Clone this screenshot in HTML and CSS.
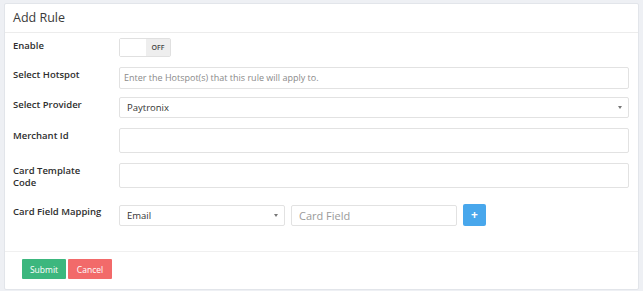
FILE: index.html
```html
<!DOCTYPE html>
<html lang="en">
<head>
    <meta charset="UTF-8">
    <meta name="viewport" content="width=device-width, initial-scale=1.0">
    <title>Add Rule</title>
    <link rel="stylesheet" href="styles.css">
</head>
<body>
<div class="card">
    <div class="card-header">Add Rule</div>

    <div class="card-body">
        <div class="form-row">
            <label>Enable</label>
            <div class="toggle">
                <span class="toggle-handle"></span>
                <span class="toggle-off">OFF</span>
            </div>
        </div>

        <div class="form-row hotspot">
            <label>Select Hotspot</label>
            <div class="input placeholder">Enter the Hotspot(s) that this rule will apply to.</div>
        </div>

        <div class="form-row">
            <label>Select Provider</label>
            <div class="input select">Paytronix<span class="caret"></span></div>
        </div>

        <div class="form-row tall">
            <label>Merchant Id</label>
            <div class="input"></div>
        </div>

        <div class="form-row tall last-tall">
            <label>Card Template Code</label>
            <div class="input"></div>
        </div>

        <div class="form-row">
            <label>Card Field Mapping</label>
            <div class="mapping">
                <div class="input select small">Email<span class="caret"></span></div>
                <div class="input small big-placeholder">Card Field</div>
                <button class="btn-add">+</button>
            </div>
        </div>
    </div>

    <div class="card-footer">
        <button class="btn btn-submit">Submit</button>
        <button class="btn btn-cancel">Cancel</button>
    </div>
</div>
</body>
</html>
```

FILE: styles.css
```css
* {
    box-sizing: border-box;
}

body {
    font-family: "Open Sans", "Liberation Sans", sans-serif;
    background-color: #eef0f4;
    color: #333;
    margin: 0;
    padding: 3px 4px 2px 4px;
}

.card {
    background-color: #fff;
    border: 1px solid #e2e5ea;
    border-radius: 2px;
}

.card-header {
    font-size: 12.5px;
    font-weight: 500;
    color: #3a3a3a;
    padding: 0 8px;
    line-height: 28px;
    height: 29px;
    border-bottom: 1px solid #ececec;
}

.card-body {
    padding: 5px 9px 25px 8px;
    display: flex;
    flex-direction: column;
    gap: 10px;
}

.form-row {
    display: flex;
    align-items: flex-start;
}

.form-row.hotspot {
    margin-bottom: -2px;
}

.form-row.last-tall {
    margin-bottom: 5px;
}

.form-row label {
    width: 90px;
    flex: 0 0 90px;
    margin-right: 16px;
    font-size: 9.5px;
    font-weight: 600;
    color: #2e2e2e;
    line-height: 12px;
    padding-top: 2px;
}

.input {
    flex: 1;
    height: 21px;
    border: 1px solid #e2e2e2;
    border-radius: 2px;
    font-size: 9.5px;
    line-height: 19px;
    padding: 0 7px;
    color: #333;
    position: relative;
}

.hotspot .input {
    height: 22px;
    line-height: 20px;
    padding-left: 4px;
}

.form-row.tall .input {
    height: 25px;
}

.placeholder {
    color: #8a8a8a;
    font-size: 9px;
}

.big-placeholder {
    color: #9a9a9a;
    font-size: 11px;
}

.select .caret {
    position: absolute;
    right: 6px;
    top: 8px;
    border-left: 2.5px solid transparent;
    border-right: 2.5px solid transparent;
    border-top: 3px solid #777;
}

.mapping {
    flex: 1;
    display: flex;
    align-items: center;
    gap: 6px;
}

.input.small {
    flex: 0 0 166px;
    height: 21px;
    line-height: 19px;
}

.btn-add {
    width: 23px;
    height: 22px;
    border: none;
    border-radius: 2px;
    background-color: #48a7ec;
    color: #fff;
    font-weight: bold;
    font-size: 12px;
    line-height: 22px;
    padding: 0;
    font-family: "Open Sans", sans-serif;
}

.toggle {
    display: flex;
    width: 52px;
    height: 19px;
    border: 1px solid #e0e0e0;
    border-radius: 2px;
}

.toggle-handle {
    width: 26px;
    background-color: #fff;
}

.toggle-off {
    flex: 1;
    background-color: #eeeeee;
    font-size: 7px;
    font-weight: 600;
    color: #444;
    text-align: center;
    line-height: 17px;
}

.card-footer {
    border-top: 1px solid #f0f0f0;
    padding: 7px 17px 10px;
    display: flex;
    gap: 2px;
}

.btn {
    border: none;
    border-radius: 1px;
    color: #fff;
    font-size: 8.5px;
    font-family: "Open Sans", sans-serif;
    width: 44px;
    height: 20px;
    padding: 0;
}

.btn-submit {
    background-color: #3cb77e;
}

.btn-cancel {
    background-color: #f26a6a;
}
```
